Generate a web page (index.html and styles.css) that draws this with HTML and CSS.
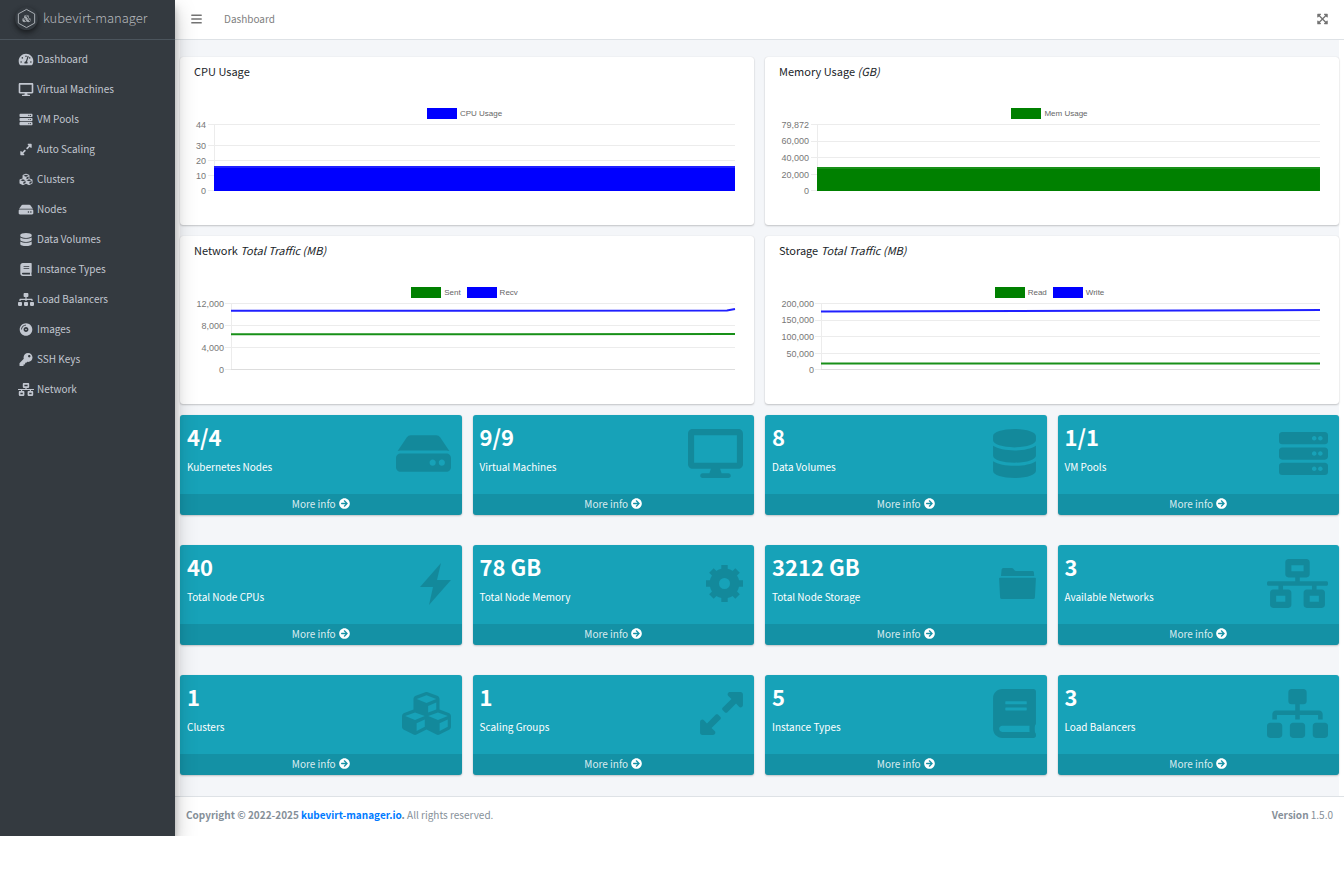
FILE: index.html
```html
<!DOCTYPE html>
<html lang="en">
<head>
<meta charset="utf-8">
<title>kubevirt-manager</title>
<link rel="stylesheet" href="styles.css">
</head>
<body>
<svg class="sprite" aria-hidden="true">
  <symbol id="i-dash" viewBox="0 0 576 512"><path d="M288 32C128.94 32 0 160.94 0 320c0 52.8 14.25 102.26 39.06 144.8 5.61 9.62 16.3 15.2 27.44 15.2h443c11.14 0 21.83-5.58 27.44-15.2C561.75 422.26 576 372.8 576 320c0-159.06-128.94-288-288-288zm0 64c14.71 0 26.58 10.13 30.32 23.65-1.11 2.26-2.64 4.23-3.45 6.67l-9.22 27.67c-5.13 3.49-10.97 6.01-17.64 6.01-17.67 0-32-14.33-32-32S270.33 96 288 96zM96 384c-17.67 0-32-14.33-32-32s14.33-32 32-32 32 14.33 32 32-14.33 32-32 32zm48-160c-17.67 0-32-14.33-32-32s14.33-32 32-32 32 14.33 32 32-14.33 32-32 32zm246.77-72.41l-61.33 184C343.13 347.33 352 364.54 352 384c0 11.72-3.38 22.55-8.88 32H232.88c-5.5-9.45-8.88-20.28-8.88-32 0-33.94 26.5-61.43 59.9-63.59l61.34-184.01c4.17-12.56 17.73-19.45 30.36-15.17 12.57 4.19 19.35 17.79 15.17 30.36zm14.66 57.2l15.52-46.55c3.47-1.29 7.13-2.23 11.05-2.23 17.67 0 32 14.33 32 32s-14.33 32-32 32c-11.38-.01-20.89-6.28-26.57-15.22zM480 384c-17.67 0-32-14.33-32-32s14.33-32 32-32 32 14.33 32 32-14.33 32-32 32z"/></symbol>
  <symbol id="i-desktop" viewBox="0 0 576 512"><path d="M528 0H48C21.5 0 0 21.5 0 48v320c0 26.5 21.5 48 48 48h192l-16 48h-72c-13.3 0-24 10.7-24 24s10.7 24 24 24h272c13.3 0 24-10.7 24-24s-10.7-24-24-24h-72l-16-48h192c26.5 0 48-21.5 48-48V48c0-26.5-21.5-48-48-48zm-16 352H64V64h448v288z"/></symbol>
  <symbol id="i-server" viewBox="0 0 512 512"><path id="p-unit" d="M480 160H32c-17.673 0-32-14.327-32-32V64c0-17.673 14.327-32 32-32h448c17.673 0 32 14.327 32 32v64c0 17.673-14.327 32-32 32zm-48-88c-13.255 0-24 10.745-24 24s10.745 24 24 24 24-10.745 24-24-10.745-24-24-24zm-64 0c-13.255 0-24 10.745-24 24s10.745 24 24 24 24-10.745 24-24-10.745-24-24-24z"/><use href="#p-unit" y="160"/><use href="#p-unit" y="320"/></symbol>
  <symbol id="i-expand" viewBox="0 0 448 512"><path d="M212.686 315.314L120 408l32.922 31.029c15.12 15.12 4.412 40.971-16.97 40.971h-112C10.697 480 0 469.255 0 456V344c0-21.382 25.803-32.09 40.922-16.971L72 360l92.686-92.686c6.248-6.248 16.379-6.248 22.627 0l25.373 25.373c6.249 6.248 6.249 16.378 0 22.627zm22.628-118.628L328 104l-32.922-31.029C279.958 57.851 290.666 32 312.048 32h112C437.303 32 448 42.745 448 56v112c0 21.382-25.803 32.09-40.922 16.971L376 152l-92.686 92.686c-6.248 6.248-16.379 6.248-22.627 0l-25.373-25.373c-6.249-6.248-6.249-16.378 0-22.627z"/></symbol>
  <symbol id="i-cubes" viewBox="0 0 512 512"><path d="M488.6 250.2L392 214V105.5c0-15-9.3-28.4-23.4-33.7l-100-37.5c-8.1-3.1-17.1-3.1-25.3 0l-100 37.5c-14.1 5.3-23.4 18.7-23.4 33.7V214l-96.6 36.2C9.3 255.5 0 268.9 0 283.9V394c0 13.6 7.7 26.1 19.9 32.2l100 50c10.1 5.1 22.1 5.1 32.2 0l103.9-52 103.9 52c10.1 5.1 22.1 5.1 32.2 0l100-50c12.2-6.1 19.9-18.6 19.9-32.2V283.9c0-15-9.3-28.4-23.4-33.7zM358 214.8l-85 31.9v-68.2l85-37v73.3zM154 104.1l102-38.2 102 38.2v.6l-102 41.4-102-41.4v-.6zm84 291.1l-85 42.5v-79.1l85-38.8v75.4zm0-112l-102 41.4-102-41.4v-.6l102-38.2 102 38.2v.6zm240 112l-85 42.5v-79.1l85-38.8v75.4zm0-112l-102 41.4-102-41.4v-.6l102-38.2 102 38.2v.6z"/></symbol>
  <symbol id="i-hdd" viewBox="0 0 576 512"><path d="M576 304v96c0 26.51-21.49 48-48 48H48c-26.51 0-48-21.49-48-48v-96c0-26.51 21.49-48 48-48h480c26.51 0 48 21.49 48 48zm-48-80a79.557 79.557 0 0 1 30.777 6.165L462.25 85.374A48.003 48.003 0 0 0 422.311 64H153.689a48 48 0 0 0-39.938 21.374L17.223 230.165A79.557 79.557 0 0 1 48 224h480zm-48 96c-17.673 0-32 14.327-32 32s14.327 32 32 32 32-14.327 32-32-14.327-32-32-32zm-96 0c-17.673 0-32 14.327-32 32s14.327 32 32 32 32-14.327 32-32-14.327-32-32-32z"/></symbol>
  <symbol id="i-database" viewBox="0 0 448 512"><path d="M448 73.143v45.714C448 159.143 347.667 192 224 192S0 159.143 0 118.857V73.143C0 32.857 100.333 0 224 0s224 32.857 224 73.143zM448 176v102.857C448 319.143 347.667 352 224 352S0 319.143 0 278.857V176c48.125 33.143 136.208 48.572 224 48.572S399.874 209.143 448 176zm0 160v102.857C448 479.143 347.667 512 224 512S0 479.143 0 438.857V336c48.125 33.143 136.208 48.572 224 48.572S399.874 369.143 448 336z"/></symbol>
  <symbol id="i-book" viewBox="0 0 448 512"><path d="M448 360V24c0-13.3-10.7-24-24-24H96C43 0 0 43 0 96v320c0 53 43 96 96 96h328c13.3 0 24-10.7 24-24v-16c0-7.5-3.5-14.3-8.9-18.7-4.2-15.4-4.2-59.3 0-74.7 5.4-4.3 8.9-11.1 8.9-18.6zM128 134c0-3.3 2.7-6 6-6h212c3.3 0 6 2.7 6 6v20c0 3.3-2.7 6-6 6H134c-3.3 0-6-2.7-6-6v-20zm0 64c0-3.3 2.7-6 6-6h212c3.3 0 6 2.7 6 6v20c0 3.3-2.7 6-6 6H134c-3.3 0-6-2.7-6-6v-20zm253.4 250H96c-17.7 0-32-14.3-32-32 0-17.6 14.4-32 32-32h285.4c-1.9 17.1-1.9 46.9 0 64z"/></symbol>
  <symbol id="i-sitemap" viewBox="0 0 640 512"><path d="M128 352H32c-17.67 0-32 14.33-32 32v96c0 17.67 14.33 32 32 32h96c17.67 0 32-14.33 32-32v-96c0-17.67-14.33-32-32-32zm-24-80h192v48h48v-48h192v48h48v-57.59c0-21.17-17.23-38.41-38.41-38.41H344v-64h40c17.67 0 32-14.33 32-32V32c0-17.67-14.33-32-32-32H256c-17.67 0-32 14.33-32 32v96c0 17.67 14.33 32 32 32h40v64H94.41C73.23 224 56 241.23 56 262.41V320h48v-48zm264 80h-96c-17.67 0-32 14.33-32 32v96c0 17.67 14.33 32 32 32h96c17.67 0 32-14.33 32-32v-96c0-17.67-14.33-32-32-32zm240 0h-96c-17.67 0-32 14.33-32 32v96c0 17.67 14.33 32 32 32h96c17.67 0 32-14.33 32-32v-96c0-17.67-14.33-32-32-32z"/></symbol>
  <symbol id="i-disc" viewBox="0 0 496 512"><path d="M248 8C111 8 0 119 0 256s111 248 248 248 248-111 248-248S385 8 248 8zM88 256H56c0-105.9 86.1-192 192-192v32c-88.2 0-160 71.8-160 160zm160 96c-53 0-96-43-96-96s43-96 96-96 96 43 96 96-43 96-96 96zm0-128c-17.7 0-32 14.3-32 32s14.3 32 32 32 32-14.3 32-32-14.3-32-32-32z"/></symbol>
  <symbol id="i-key" viewBox="0 0 512 512"><path d="M512 176.001C512 273.203 433.202 352 336 352c-11.22 0-22.19-1.062-32.827-3.069l-24.012 27.014A23.999 23.999 0 0 1 261.223 384H224v40c0 13.255-10.745 24-24 24h-40v40c0 13.255-10.745 24-24 24H24c-13.255 0-24-10.745-24-24v-78.059c0-6.365 2.529-12.47 7.029-16.971l161.802-161.802C163.108 213.814 160 195.271 160 176 160 78.798 238.797.001 335.999 0 433.488-.001 512 78.511 512 176.001zM336 128c0 26.51 21.49 48 48 48s48-21.49 48-48-21.49-48-48-48-48 21.49-48 48z"/></symbol>
  <symbol id="i-network" viewBox="0 0 640 512"><path d="M640 264v-16c0-8.84-7.16-16-16-16H344v-40h72c17.67 0 32-14.33 32-32V32c0-17.67-14.33-32-32-32H224c-17.67 0-32 14.33-32 32v128c0 17.67 14.33 32 32 32h72v40H16c-8.84 0-16 7.16-16 16v16c0 8.84 7.16 16 16 16h104v40H64c-17.67 0-32 14.33-32 32v128c0 17.67 14.33 32 32 32h160c17.67 0 32-14.33 32-32V352c0-17.67-14.33-32-32-32h-56v-40h304v40h-56c-17.67 0-32 14.33-32 32v128c0 17.67 14.33 32 32 32h160c17.67 0 32-14.33 32-32V352c0-17.67-14.33-32-32-32h-56v-40h104c8.84 0 16-7.16 16-16zM256 128V64h128v64H256zm-64 320H96v-64h96v64zm352 0h-96v-64h96v64z"/></symbol>
  <symbol id="i-arrow" viewBox="0 0 512 512"><path d="M256 8c137 0 248 111 248 248S393 504 256 504 8 393 8 256 119 8 256 8zm-28.9 143.6l75.5 72.4H120c-13.3 0-24 10.7-24 24v16c0 13.3 10.7 24 24 24h182.6l-75.5 72.4c-9.7 9.3-9.9 24.8-.4 34.3l11 10.9c9.4 9.4 24.6 9.4 33.9 0L404.3 273c9.4-9.4 9.4-24.6 0-33.9L271.6 106.3c-9.4-9.4-24.6-9.4-33.9 0l-11 10.9c-9.5 9.6-9.3 25.1.4 34.4z"/></symbol>
  <symbol id="i-bars" viewBox="0 0 448 512"><rect y="60" width="448" height="72" rx="16"/><rect y="220" width="448" height="72" rx="16"/><rect y="380" width="448" height="72" rx="16"/></symbol>
  <symbol id="i-full" viewBox="0 0 448 512"><path d="M448 344v112a23.94 23.94 0 0 1-24 24H312c-21.39 0-32.09-25.9-17-41l36.2-36.2L224 295.6 116.77 402.9 153 439c15.09 15.1 4.39 41-17 41H24a23.94 23.94 0 0 1-24-24V344c0-21.4 25.89-32.1 41-17l36.19 36.2L184.46 256 77.18 148.7 41 185c-15.1 15.1-41 4.4-41-17V56a23.94 23.94 0 0 1 24-24h112c21.39 0 32.09 25.9 17 41l-36.2 36.2L224 216.4l107.23-107.3L295 73c-15.09-15.1-4.39-41 17-41h112a23.94 23.94 0 0 1 24 24v112c0 21.4-25.89 32.1-41 17l-36.19-36.2L263.54 256l107.28 107.3L407 327.1c15.1-15.2 41-4.5 41 16.9z"/></symbol>
  <symbol id="i-bolt" viewBox="0 0 31 49"><path d="M21 4L0 28h13L9 46l22-25H17z"/></symbol>
  <symbol id="i-gear" viewBox="0 0 37 49"><circle cx="18.5" cy="24.5" r="10.2" fill="none" stroke="currentColor" stroke-width="9.4"/><path id="p-tooth" d="M15.3 6h6.4v5h-6.4zM15.3 38h6.4v5h-6.4zM0 21.3h5v6.4H0zM32 21.3h5v6.4h-5z"/><use href="#p-tooth" transform="rotate(45 18.5 24.5)"/></symbol>
  <symbol id="i-folder" viewBox="0 0 37 49"><path d="M2 17l.6-6.500Q2.800 9 4.300 9h8.400q1.300 0 2 1.300l.6.8q.6 1 1.700 1h16.500q1.300 0 1.400 1.300L35.200 17zM.9 18.700h35.200q.9 0 .8 1l-1 18.800q-.2 1.500-1.600 1.500H2.700q-1.400 0-1.600-1.500L.1 19.700q-.1-1 .8-1z"/></symbol>
</svg>
<div class="wrapper">
  <aside class="sidebar">
    <a class="brand" href="#">
      <svg class="logo" viewBox="0 0 24 24" aria-hidden="true"><path d="M12 2.500l8.500 4.700v9.600L12 21.500l-8.500-4.700V7.200z" fill="none" stroke="#aeb3b8" stroke-width="1"/><svg x="7.500" y="7.500" width="9" height="9"><use href="#i-cubes"/></svg></svg>
      <span>kubevirt-manager</span>
    </a>
    <nav class="nav">
      <a href="#"><svg><use href="#i-dash"/></svg>Dashboard</a>
      <a href="#"><svg><use href="#i-desktop"/></svg>Virtual Machines</a>
      <a href="#"><svg><use href="#i-server"/></svg>VM Pools</a>
      <a href="#"><svg><use href="#i-expand"/></svg>Auto Scaling</a>
      <a href="#"><svg><use href="#i-cubes"/></svg>Clusters</a>
      <a href="#"><svg><use href="#i-hdd"/></svg>Nodes</a>
      <a href="#"><svg><use href="#i-database"/></svg>Data Volumes</a>
      <a href="#"><svg><use href="#i-book"/></svg>Instance Types</a>
      <a href="#"><svg><use href="#i-sitemap"/></svg>Load Balancers</a>
      <a href="#"><svg><use href="#i-disc"/></svg>Images</a>
      <a href="#"><svg><use href="#i-key"/></svg>SSH Keys</a>
      <a href="#"><svg><use href="#i-network"/></svg>Network</a>
    </nav>
  </aside>
  <div class="page">
    <header class="topbar">
      <button type="button" class="icon-btn" aria-label="Toggle menu"><svg><use href="#i-bars"/></svg></button>
      <a href="#">Dashboard</a>
      <button type="button" class="icon-btn end" aria-label="Full screen"><svg><use href="#i-full"/></svg></button>
    </header>
    <main class="content">
      <div class="charts">
        <section class="card">
          <h2>CPU Usage</h2>
          <div class="legend"><span class="key blue">CPU Usage</span></div>
          <div class="chart">
            <svg class="axis axis-xs" aria-hidden="true">
              <path d="M14 6.500h6M14 27.500h6M14 42.500h6M14 57.500h6M14 72.500h6"/>
              <text x="12" y="10">44</text><text x="12" y="31">30</text><text x="12" y="46">20</text><text x="12" y="61">10</text><text x="12" y="76">0</text>
            </svg>
            <svg class="plot" viewBox="0 0 520 80" preserveAspectRatio="none" role="img" aria-label="CPU Usage">
              <path class="grid" d="M0 6.500h520M0 27.500h520M0 42.500h520M0 57.500h520M0 72.500h520M.5 6v67"/>
              <path class="fill-blue" d="M0 49h520v24H0z"/><path class="line line-blue" d="M0 49h520"/>
            </svg>
          </div>
        </section>
        <section class="card">
          <h2>Memory Usage <i>(GB)</i></h2>
          <div class="legend"><span class="key green">Mem Usage</span></div>
          <div class="chart">
            <svg class="axis axis-s" aria-hidden="true">
              <path d="M32 6.500h6M32 23.500h6M32 39.500h6M32 56.500h6M32 72.500h6"/>
              <text x="30" y="10">79,872</text><text x="30" y="26">60,000</text><text x="30" y="43">40,000</text><text x="30" y="60">20,000</text><text x="30" y="76">0</text>
            </svg>
            <svg class="plot" viewBox="0 0 502 80" preserveAspectRatio="none" role="img" aria-label="Memory Usage">
              <path class="grid" d="M0 6.500h502M0 23.500h502M0 39.500h502M0 56.500h502M0 72.500h502M.5 6v67"/>
              <path class="fill-green" d="M0 50h502v23H0z"/><path class="line line-green" d="M0 50h502"/>
            </svg>
          </div>
        </section>
        <section class="card">
          <h2>Network <i>Total Traffic (MB)</i></h2>
          <div class="legend"><span class="key green">Sent</span><span class="key blue">Recv</span></div>
          <div class="chart">
            <svg class="axis axis-m" aria-hidden="true">
              <path d="M31 6.500h6M31 28.500h6M31 50.500h6M31 72.500h6"/>
              <text x="30" y="10">12,000</text><text x="30" y="32">8,000</text><text x="30" y="54">4,000</text><text x="30" y="76">0</text>
            </svg>
            <svg class="plot" viewBox="0 0 504 80" preserveAspectRatio="none" role="img" aria-label="Network traffic">
              <path class="grid" d="M0 6.500h504M0 28.500h504M0 50.500h504M.5 6v67"/><path class="base" d="M0 72.500h504"/>
              <path class="line line-green" d="M0 37.300L504 37"/><path class="line line-blue" d="M0 13.800L496 13.600L504 12"/>
            </svg>
          </div>
        </section>
        <section class="card">
          <h2>Storage <i>Total Traffic (MB)</i></h2>
          <div class="legend"><span class="key green">Read</span><span class="key blue">Write</span></div>
          <div class="chart">
            <svg class="axis axis-l" aria-hidden="true">
              <path d="M36 6.500h6M36 23.500h6M36 39.500h6M36 56.500h6M36 72.500h6"/>
              <text x="35" y="10">200,000</text><text x="35" y="26">150,000</text><text x="35" y="43">100,000</text><text x="35" y="60">50,000</text><text x="35" y="76">0</text>
            </svg>
            <svg class="plot" viewBox="0 0 498 80" preserveAspectRatio="none" role="img" aria-label="Storage traffic">
              <path class="grid" d="M0 6.500h498M0 23.500h498M0 39.500h498M0 56.500h498M.5 6v67"/><path class="base" d="M0 72.500h498"/>
              <path class="line line-green" d="M0 66.500h498"/><path class="line line-blue" d="M0 14.500L498 13"/>
            </svg>
          </div>
        </section>
      </div>
      <div class="boxes">
        <section class="box"><h3>4/4</h3><p>Kubernetes Nodes</p><svg class="pic"><use href="#i-hdd"/></svg><a href="#">More info <svg><use href="#i-arrow"/></svg></a></section>
        <section class="box"><h3>9/9</h3><p>Virtual Machines</p><svg class="pic"><use href="#i-desktop"/></svg><a href="#">More info <svg><use href="#i-arrow"/></svg></a></section>
        <section class="box"><h3>8</h3><p>Data Volumes</p><svg class="pic w448"><use href="#i-database"/></svg><a href="#">More info <svg><use href="#i-arrow"/></svg></a></section>
        <section class="box"><h3>1/1</h3><p>VM Pools</p><svg class="pic w512"><use href="#i-server"/></svg><a href="#">More info <svg><use href="#i-arrow"/></svg></a></section>
        <section class="box"><h3>40</h3><p>Total Node CPUs</p><svg class="pic w324"><use href="#i-bolt"/></svg><a href="#">More info <svg><use href="#i-arrow"/></svg></a></section>
        <section class="box"><h3>78 GB</h3><p>Total Node Memory</p><svg class="pic w387"><use href="#i-gear"/></svg><a href="#">More info <svg><use href="#i-arrow"/></svg></a></section>
        <section class="box"><h3>3212 GB</h3><p>Total Node Storage</p><svg class="pic w387"><use href="#i-folder"/></svg><a href="#">More info <svg><use href="#i-arrow"/></svg></a></section>
        <section class="box"><h3>3</h3><p>Available Networks</p><svg class="pic w640"><use href="#i-network"/></svg><a href="#">More info <svg><use href="#i-arrow"/></svg></a></section>
        <section class="box"><h3>1</h3><p>Clusters</p><svg class="pic w512"><use href="#i-cubes"/></svg><a href="#">More info <svg><use href="#i-arrow"/></svg></a></section>
        <section class="box"><h3>1</h3><p>Scaling Groups</p><svg class="pic w448"><use href="#i-expand"/></svg><a href="#">More info <svg><use href="#i-arrow"/></svg></a></section>
        <section class="box"><h3>5</h3><p>Instance Types</p><svg class="pic w448"><use href="#i-book"/></svg><a href="#">More info <svg><use href="#i-arrow"/></svg></a></section>
        <section class="box"><h3>3</h3><p>Load Balancers</p><svg class="pic w640"><use href="#i-sitemap"/></svg><a href="#">More info <svg><use href="#i-arrow"/></svg></a></section>
      </div>
    </main>
    <footer class="footer">
      <div><strong>Copyright © 2022-2025 <a href="#">kubevirt-manager.io</a>.</strong> All rights reserved.</div>
      <div><b>Version</b> 1.5.0</div>
    </footer>
  </div>
</div>
</body>
</html>
```
FILE: styles.css
```css
* { box-sizing: border-box; }
body { margin: 0; background: #fff; color: #212529; font: 10px/16px "Noto Sans CJK SC", "Noto Sans", sans-serif; }
a { color: inherit; text-decoration: none; }
svg { fill: currentColor; }
h2, h3, p { margin: 0; font-weight: 400; }
.sprite { display: none; }

.wrapper { display: flex; overflow: hidden; }

.sidebar { flex: none; width: 175px; background: #343a40; color: #c2c7d0; z-index: 1; box-shadow: 0 10px 20px rgba(0,0,0,.25), 0 7px 7px rgba(0,0,0,.22); }
.brand { display: flex; align-items: center; gap: 5px; height: 40px; padding: 0 0 3px 15px; border-bottom: 1px solid #4b545c; font-size: 13px; font-weight: 300; line-height: 20px; color: #b4b8bc; }
.logo { width: 23px; height: 23px; border-radius: 50%; color: #aeb3b8; box-shadow: 0 3px 6px rgba(0,0,0,.3), 0 2px 4px rgba(0,0,0,.3); }
.nav { display: flex; flex-direction: column; padding: 4px 0 0 18px; }
.nav a { display: flex; align-items: center; gap: 3px; height: 30px; }
.nav svg { width: 16px; height: 13px; }

.page { flex: 1; min-width: 0; }
.topbar { display: flex; align-items: center; height: 40px; padding: 0 16px 2px; border-bottom: 1px solid #dee2e6; color: #808080; }
.icon-btn { display: flex; margin: 0 22px 0 0; padding: 0; border: 0; background: none; color: #737373; }
.icon-btn svg { width: 11px; height: 12px; }
.icon-btn.end { margin: 0 0 0 auto; }

.content { margin: 0 5px; padding: 17px 0 21px; background: #f4f6f9; }
.charts { display: grid; grid-template-columns: 1fr 1fr; gap: 11px; }
.card { padding: 6px 19px 27px 14px; background: #fff; border-radius: 3px; box-shadow: 0 0 1px rgba(0,0,0,.13), 0 1px 2px rgba(0,0,0,.2); }
.card h2 { font-size: 11px; line-height: 16px; }
.legend { display: flex; justify-content: center; gap: 6px; margin-top: 28px; font: 8px/13px "Liberation Sans", Arial, sans-serif; color: #666; }
.key { display: flex; align-items: center; gap: 3px; }
.key::before { content: ""; width: 30px; height: 11px; background: currentColor; }
.key.blue::before { background: #00f; }
.key.green::before { background: #008000; }
.chart { display: flex; margin-top: -2px; }
.axis { flex: none; height: 80px; font: 9px "Liberation Sans", Arial, sans-serif; fill: #777; text-anchor: end; }
.axis path { stroke: #ececec; }
.axis-xs { width: 20px; }
.axis-s { width: 38px; }
.axis-m { width: 37px; }
.axis-l { width: 42px; }
.plot { flex: 1; min-width: 0; height: 80px; overflow: visible; }
.grid, .base { fill: none; stroke: #ececec; vector-effect: non-scaling-stroke; }
.base { stroke: #ddd; }
.line { fill: none; stroke-width: 2px; vector-effect: non-scaling-stroke; }
.line-blue { stroke: #2020ff; }
.line-green { stroke: #189018; }
.fill-blue { fill: #00f; }
.fill-green { fill: #008000; }

.boxes { display: grid; grid-template-columns: repeat(4, 1fr); gap: 30px 11px; margin-top: 11px; }
.box { position: relative; display: flex; flex-direction: column; background: #17a2b8; color: #fff; border-radius: 3px; overflow: hidden; box-shadow: 0 0 1px rgba(0,0,0,.13), 0 1px 2px rgba(0,0,0,.2); }
.box h3 { padding: 7px 7px 0; font-size: 22px; line-height: 28px; font-weight: 700; }
.box p { padding: 9px 7px 19px; }
.box a { display: flex; align-items: center; justify-content: center; gap: 3px; height: 21px; padding-bottom: 2px; background: rgba(0,0,0,.1); color: rgba(255,255,255,.85); }
.box a svg { width: 11px; height: 11px; color: #fff; }
.pic { position: absolute; top: 14px; right: 11px; width: 55px; height: 49px; color: #000; opacity: .15; }
.w640 { width: 61px; }
.w512 { width: 49px; }
.w448 { width: 43px; }
.w387 { width: 37px; }
.w324 { width: 31px; }

.footer { display: flex; justify-content: space-between; padding: 10px 11px 13px; border-top: 1px solid #dee2e6; color: #869099; }
.footer a { color: #007bff; }
```
